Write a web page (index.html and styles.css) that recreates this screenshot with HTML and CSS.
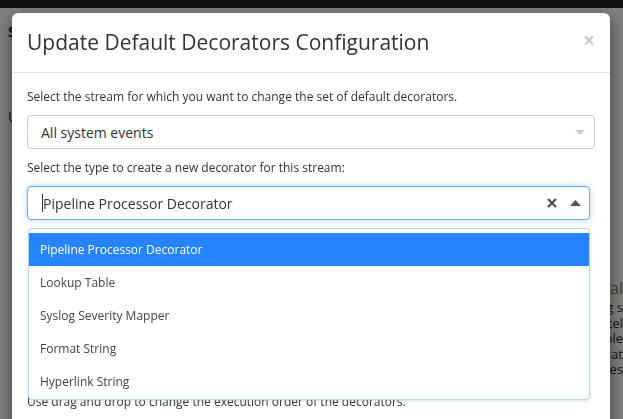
FILE: index.html
```html
<!DOCTYPE html>
<html>
<head>
<meta charset="utf-8">
<link rel="stylesheet" href="styles.css">
</head>
<body>
<div class="page">
  <nav class="navbar"></nav>
  <main class="content">
    <section class="left-col">
      <h2 class="page-title">Streams</h2>
      <p class="page-line">Use this page</p>
    </section>
    <section class="right-col">
      <h3 class="side-title">Optional</h3>
      <p class="side-text">sing s<br>ostel<br>able<br>idat<br>oces</p>
    </section>
  </main>
</div>
<div class="backdrop"></div>
<div class="modal">
  <header class="modal-header">
    <h4 class="modal-title">Update Default Decorators Configuration</h4>
    <span class="close">×</span>
  </header>
  <div class="modal-body">
    <p class="help">Select the stream for which you want to change the set of default decorators.</p>
    <div class="select">
      <span class="select-value">All system events</span>
      <svg class="caret" width="10" height="5" viewBox="0 0 10 5"><path d="M0 0 L10 0 L5 5 Z" fill="#cccccc"/></svg>
    </div>
    <p class="help label">Select the type to create a new decorator for this stream:</p>
    <div class="select-wrap">
      <div class="select focused">
        <span class="cursor"></span>
        <span class="select-value">Pipeline Processor Decorator</span>
        <svg class="clear" width="10" height="10" viewBox="0 0 10 10"><path d="M1 1 L9 9 M9 1 L1 9" stroke="#555" stroke-width="2.4" stroke-linecap="butt"/></svg>
        <svg class="caret" width="11" height="6" viewBox="0 0 11 6"><path d="M0 6 L11 6 L5.5 0 Z" fill="#555555"/></svg>
      </div>
      <ul class="menu">
        <li class="option active">Pipeline Processor Decorator</li>
        <li class="option">Lookup Table</li>
        <li class="option">Syslog Severity Mapper</li>
        <li class="option">Format String</li>
        <li class="option">Hyperlink String</li>
      </ul>
    </div>
    <div class="spacer"></div>
    <p class="help">Use drag and drop to change the execution order of the decorators.</p>
  </div>
</div>
</body>
</html>
```

FILE: styles.css
```css
* { box-sizing: border-box; }
html, body {
  margin: 0;
  padding: 0;
  height: 100%;
  overflow: hidden;
  font-family: "Open Sans", "DejaVu Sans", sans-serif;
  color: #333;
  background: #fff;
}
.page { height: 100%; }
.navbar { height: 8px; background: #222; }
.content {
  display: grid;
  grid-template-columns: 1fr 20px;
  padding-left: 8px;
}
.page-title {
  margin: 14px 0 0;
  font-size: 14px;
  font-weight: 700;
  line-height: 20px;
}
.page-line {
  margin: 65px 0 0;
  font-size: 14px;
  line-height: 20px;
}
.right-col { padding-top: 270px; margin-left: -16px; overflow: hidden; }
.side-title {
  margin: 0 0 2px;
  font-size: 16px;
  font-weight: 400;
  line-height: 20px;
  color: #777;
  white-space: nowrap;
  direction: rtl;
}
.side-text {
  margin: 0;
  font-size: 13px;
  line-height: 15.5px;
  white-space: nowrap;
  text-align: right;
}
.backdrop {
  position: fixed;
  inset: 0;
  background: rgba(0, 0, 0, 0.5);
}
.modal {
  position: fixed;
  top: 13px;
  left: 12px;
  width: 598px;
  height: 440px;
  background: #fff;
  border-radius: 6px;
  box-shadow: 0 5px 15px rgba(0, 0, 0, 0.5);
}
.modal-header {
  display: flex;
  justify-content: space-between;
  align-items: flex-start;
  padding: 15px;
  border-bottom: 1px solid #e5e5e5;
}
.modal-title {
  margin: 0;
  font-size: 21px;
  font-weight: 400;
  line-height: 29px;
  color: #333;
}
.close {
  font-size: 21px;
  font-weight: 700;
  line-height: 1;
  color: #000;
  opacity: 0.2;
  margin-top: 2px;
  margin-right: 0;
}
.modal-body { padding: 15px; }
.help {
  margin: 0 0 10px;
  font-size: 12px;
  line-height: 17px;
  color: #333;
}
.label { margin-top: 10px; }
.select {
  position: relative;
  display: flex;
  align-items: center;
  height: 34px;
  padding: 0 9px 0 13px;
  border: 1px solid #ccc;
  border-radius: 4px;
  background: #fff;
}
.select-value {
  flex: 1;
  font-size: 14px;
  color: #333;
}
.caret { display: block; }
.select-wrap { position: relative; margin-right: 5px; }
.select.focused {
  border-color: #66afe9;
  box-shadow: inset 0 1px 1px rgba(0, 0, 0, 0.075), 0 0 6px rgba(102, 175, 233, 0.5);
  padding-left: 14px;
  padding-right: 8px;
}
.cursor {
  width: 1px;
  height: 18px;
  background: #333;
  margin-right: 0;
}
.clear { display: block; margin-right: 13px; }
.menu {
  position: absolute;
  top: 42px;
  left: 1px;
  right: 0;
  margin: 0;
  padding: 4px 0;
  list-style: none;
  max-height: 172px;
  overflow: hidden;
  background: #fff;
  border: 1px solid #b8d6f4;
  border-radius: 4px;
  box-shadow: 0 1px 3px rgba(102, 175, 233, 0.35);
  z-index: 2;
}
.option {
  height: 33px;
  line-height: 33px;
  padding: 0 11px;
  font-size: 12px;
  color: #444;
}
.option.active {
  background: #2684ff;
  color: #fff;
}
.spacer { height: 173px; }
```
